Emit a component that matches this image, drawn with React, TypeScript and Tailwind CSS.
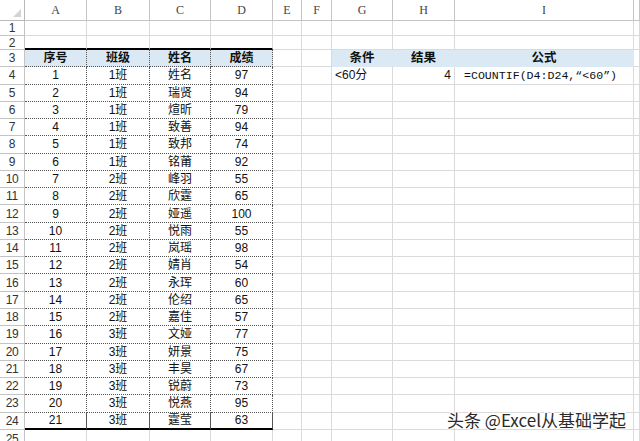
import React from "react";

const data: [number, string, string, number][] = [
  [1, "1班", "姓名", 97],
  [2, "1班", "瑞贤", 94],
  [3, "1班", "煊昕", 79],
  [4, "1班", "致善", 94],
  [5, "1班", "致邦", 74],
  [6, "1班", "铭莆", 92],
  [7, "2班", "峰羽", 55],
  [8, "2班", "欣霆", 65],
  [9, "2班", "娅遥", 100],
  [10, "2班", "悦雨", 55],
  [11, "2班", "岚瑶", 98],
  [12, "2班", "婧肖", 54],
  [13, "2班", "永珲", 60],
  [14, "2班", "伦绍", 65],
  [15, "2班", "嘉佳", 57],
  [16, "3班", "文娅", 77],
  [17, "3班", "妍景", 75],
  [18, "3班", "丰昊", 67],
  [19, "3班", "锐蔚", 73],
  [20, "3班", "悦燕", 95],
  [21, "3班", "霆莹", 63],
];

const letters = ["A", "B", "C", "D", "E", "F", "G", "H", "I", ""];
const cjk = "font-['Liberation_Sans','Noto_Sans_CJK_SC',sans-serif]";

function Grid() {
  const cells: React.ReactNode[] = [];
  // header row
  cells.push(
    <div key="corner" className="relative border-r border-b border-[#b8b8b8] bg-white">
      <svg className="absolute right-[3px] bottom-[3px]" width="8" height="8" viewBox="0 0 8 8">
        <polygon points="8,0 8,8 0,8" fill="#d4d4d4" />
      </svg>
    </div>
  );
  letters.forEach((l, i) =>
    cells.push(
      <div
        key={"h" + i}
        className="flex items-center justify-center border-r border-b border-[#c4c4c4] bg-white text-[12px] text-[#444] font-['Liberation_Serif',serif]"
      >
        {l}
      </div>
    )
  );
  for (let r = 1; r <= 25; r++) {
    cells.push(
      <div
        key={"r" + r}
        className="flex items-center justify-center border-r border-b border-[#c4c4c4] bg-white text-[12px] text-[#333] tracking-[-0.3px] font-['Liberation_Sans',sans-serif]"
      >
        {r}
      </div>
    );
    for (let c = 0; c < 10; c++) {
      let cls = "flex items-center border-r border-b border-[#dadada] text-[12px] text-[#111] " + cjk;
      let content: React.ReactNode = null;
      const inTable = c < 4 && r >= 3 && r <= 24;
      if (r === 2 && c < 4) {
        cls = "flex items-center border-r border-[#dadada] border-b-2 border-b-black";
      }
      if (inTable) {
        cls =
          "flex items-center justify-center border-r border-b border-dotted border-[#555] text-[12px] text-[#111] " +
          cjk;
        if (r === 24) cls += " border-b-2 border-b-black border-solid";
        if (r === 3) {
          cls += " bg-[#dae9f4] font-bold text-[12.5px]";
          content = ["序号", "班级", "姓名", "成绩"][c];
        } else {
          const d = data[r - 4];
          content = d[c];
        }
      }
      if (r === 3 && c >= 6 && c <= 8) {
        cls =
          "flex items-center justify-center border-r border-b border-[#dae9f4] bg-[#dae9f4] font-bold text-[12.5px] text-[#111] " +
          cjk;
        content = ["条件", "结果", "公式"][c - 6];
      }
      if (r === 4 && c === 6) {
        cls += " pl-[3px]";
        content = "<60分";
      }
      if (r === 4 && c === 7) {
        cls += " justify-end pr-[3px]";
        content = "4";
      }
      if (r === 4 && c === 8) {
        cls =
          "flex items-center border-r border-b border-[#dadada] pl-[9px] text-[11.6px] text-[#111] font-['Liberation_Mono',monospace] whitespace-nowrap";
        content = "=COUNTIF(D4:D24,“<60”)";
      }
      cells.push(
        <div key={r + "-" + c} className={cls}>
          {content}
        </div>
      );
    }
  }
  return (
    <div className="grid grid-cols-[25px_62px_63px_61px_62px_29px_30px_61px_62px_179px_1fr] grid-rows-[21px_15px_14px_repeat(22,17.27px)_1fr] w-[640px] h-[441px]">
      {cells}
    </div>
  );
}

export default function App() {
  return (
    <div className="relative w-[640px] h-[441px] overflow-hidden bg-white">
      <Grid />
      <div className="absolute left-[447px] top-[409px] text-[17px] leading-[22px] text-[#2a2a2a] whitespace-nowrap font-['Noto_Sans_CJK_SC',sans-serif] [text-shadow:1px_1px_0_#fff,-1px_-1px_0_#fff,1px_-1px_0_#fff,-1px_1px_0_#fff]">
        头条 @Excel从基础学起
      </div>
    </div>
  );
}
